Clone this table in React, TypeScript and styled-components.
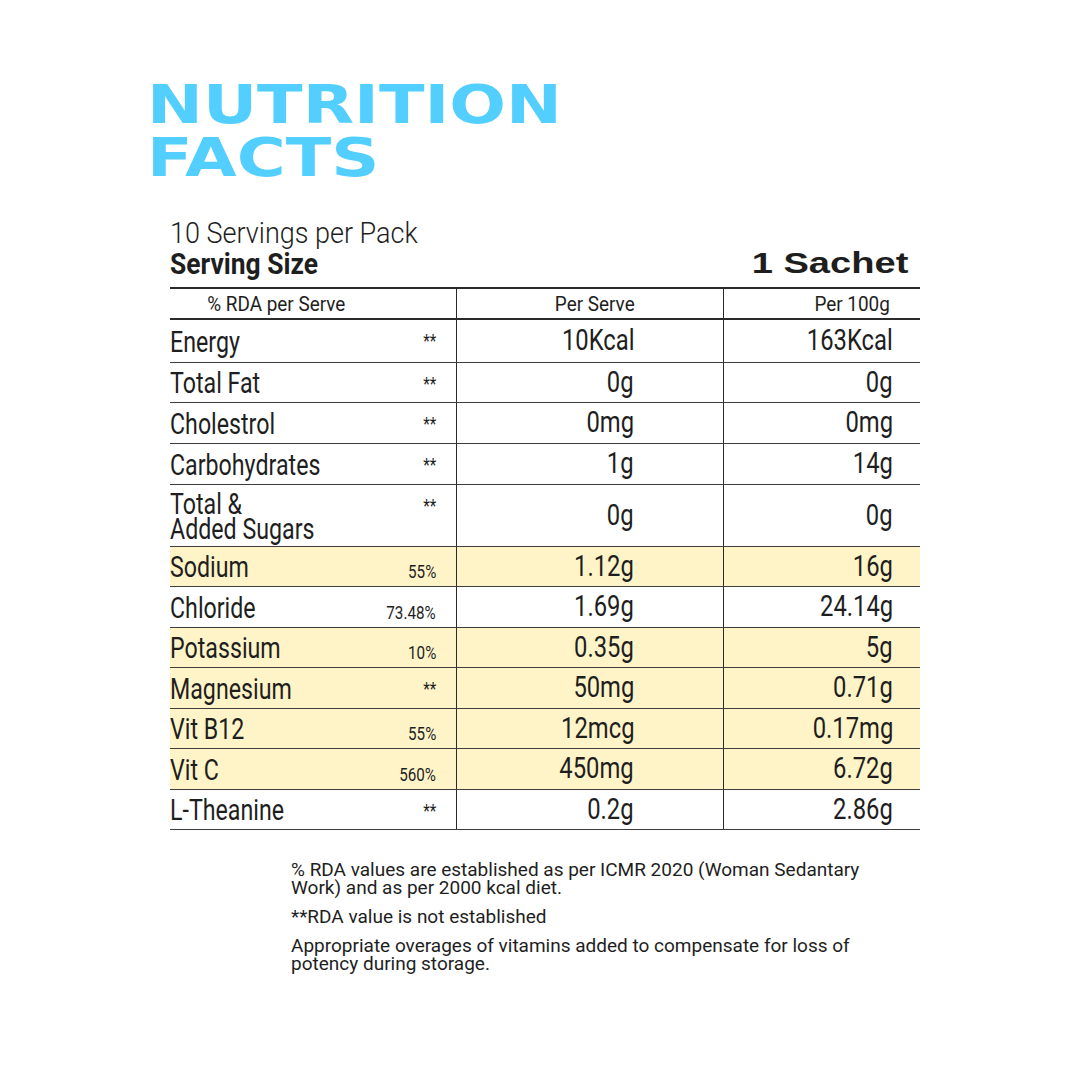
import React from "react";
import styled, { createGlobalStyle } from "styled-components";

const Global = createGlobalStyle`
  html, body { margin: 0; padding: 0; background: #ffffff; }
  body { font-family: Roboto, "Liberation Sans", sans-serif; color: #1e1e1e; }
`;

const Page = styled.div`
  width: 1080px;
  height: 1080px;
  box-sizing: border-box;
  padding: 78px 0 0 150px;
  background: #fff;
  overflow: hidden;
`;

const Title = styled.h1`
  margin: 0 0 0 -3px;
  font-family: "DejaVu Sans", sans-serif;
  font-weight: 700;
  font-size: 53px;
  line-height: 53px;
  color: #52cfff;
`;

const TitleLine = styled.span`
  display: block;
  transform: scaleX(1.26);
  transform-origin: left center;
  white-space: nowrap;
`;

const Panel = styled.div`
  width: 750px;
  margin: 34px 0 0 20px;
`;

const Cond = styled.span<{ $origin?: string; $sx?: number }>`
  display: inline-block;
  white-space: nowrap;
  transform: scaleX(${(p) => p.$sx ?? 0.84});
  transform-origin: ${(p) => p.$origin || "left"} center;
`;

const Servings = styled.div`
  font-size: 30px;
  font-weight: 300;
  line-height: 30px;
  color: #1e1e1e;
`;

const SizeRow = styled.div`
  display: flex;
  justify-content: space-between;
  align-items: flex-end;
  padding-bottom: 9px;
  border-bottom: 2px solid #2a2a2a;
`;

const SizeLabel = styled.div`
  font-size: 30px;
  font-weight: 700;
  line-height: 28px;
`;

const Sachet = styled.div`
  font-family: "Liberation Sans", Arial, sans-serif;
  font-weight: 700;
  font-size: 30px;
  line-height: 30px;
  margin-right: 12px;
  span {
    display: inline-block;
    transform: scaleX(1.27);
    transform-origin: right center;
  }
`;

const Row = styled.div<{ $hl?: boolean; $h?: number; $head?: boolean }>`
  display: grid;
  grid-template-columns: 286px 267px 197px;
  height: ${(p) => p.$h || 40}px;
  background: ${(p) => (p.$hl ? "#fff4c8" : "transparent")};
  border-bottom: ${(p) => (p.$head ? "2px solid #2a2a2a" : "1px solid #3d3d3d")};
  box-sizing: border-box;
`;

const HeadCell = styled.div<{ $pad: number; $divider?: boolean }>`
  display: flex;
  align-items: center;
  justify-content: flex-end;
  padding-right: ${(p) => p.$pad}px;
  font-size: 21px;
  color: #1e1e1e;
  border-left: ${(p) => (p.$divider ? "1.5px solid #2a2a2a" : "none")};
`;

const NameCell = styled.div`
  display: flex;
  align-items: center;
  justify-content: space-between;
  padding-right: 20px;
`;

const Name = styled.div`
  font-size: 29px;
  line-height: 25px;
  padding-top: 2px;
`;

const Rda = styled.div<{ $star?: boolean }>`
  font-size: 19px;
  align-self: ${(p) => (p.$star ? "flex-start" : "flex-end")};
  padding-top: ${(p) => (p.$star ? "9px" : "0")};
  padding-bottom: ${(p) => (p.$star ? "0" : "3px")};
`;

const ValueCell = styled.div<{ $pad: number }>`
  display: flex;
  align-items: center;
  justify-content: flex-end;
  padding-right: ${(p) => p.$pad}px;
  border-left: 1.5px solid #2a2a2a;
  font-size: 29px;
  padding-bottom: 2px;
`;

const Notes = styled.div`
  margin: 31px 0 0 121px;
  width: 620px;
  font-size: 19px;
  line-height: 18px;
  color: #1e1e1e;
  display: flex;
  flex-direction: column;
  gap: 11px;
`;

const Note = styled.p`
  margin: 0;
  white-space: nowrap;
`;

type Item = { name: React.ReactNode; rda: string; serve: string; per100: string; hl?: boolean; h?: number };

const items: Item[] = [
  { name: "Energy", rda: "**", serve: "10Kcal", per100: "163Kcal", h: 43 },
  { name: "Total Fat", rda: "**", serve: "0g", per100: "0g" },
  { name: "Cholestrol", rda: "**", serve: "0mg", per100: "0mg", h: 41 },
  { name: "Carbohydrates", rda: "**", serve: "1g", per100: "14g", h: 41 },
  {
    name: (
      <>
        Total &amp;
        <br />
        Added Sugars
      </>
    ),
    rda: "**",
    serve: "0g",
    per100: "0g",
    h: 62,
  },
  { name: "Sodium", rda: "55%", serve: "1.12g", per100: "16g", hl: true },
  { name: "Chloride", rda: "73.48%", serve: "1.69g", per100: "24.14g", h: 41 },
  { name: "Potassium", rda: "10%", serve: "0.35g", per100: "5g", hl: true },
  { name: "Magnesium", rda: "**", serve: "50mg", per100: "0.71g", hl: true, h: 41 },
  { name: "Vit B12", rda: "55%", serve: "12mcg", per100: "0.17mg", hl: true },
  { name: "Vit C", rda: "560%", serve: "450mg", per100: "6.72g", hl: true, h: 41 },
  { name: "L-Theanine", rda: "**", serve: "0.2g", per100: "2.86g" },
];

export default function App() {
  return (
    <>
      <Global />
      <Page>
        <Title>
          <TitleLine>NUTRITION</TitleLine>
          <TitleLine>FACTS</TitleLine>
        </Title>
        <Panel>
          <Servings>
            <Cond $sx={0.9}>10 Servings per Pack</Cond>
          </Servings>
          <SizeRow>
            <SizeLabel>
              <Cond $sx={0.88}>Serving Size</Cond>
            </SizeLabel>
            <Sachet>
              <span>1 Sachet</span>
            </Sachet>
          </SizeRow>
          <Row $head $h={31}>
            <HeadCell $pad={111}>
              <Cond $origin="right" $sx={0.9}>% RDA per Serve</Cond>
            </HeadCell>
            <HeadCell $pad={88} $divider>
              <Cond $origin="right" $sx={0.9}>Per Serve</Cond>
            </HeadCell>
            <HeadCell $pad={30} $divider>
              <Cond $origin="right" $sx={0.9}>Per 100g</Cond>
            </HeadCell>
          </Row>
          {items.map((it, i) => (
            <Row key={i} $hl={it.hl} $h={it.h}>
              <NameCell>
                <Name>
                  <Cond $sx={0.8}>{it.name}</Cond>
                </Name>
                <Rda $star={it.rda === "**"}>
                  <Cond $origin="right" $sx={0.8}>{it.rda}</Cond>
                </Rda>
              </NameCell>
              <ValueCell $pad={89}>
                <Cond $origin="right" $sx={0.82}>{it.serve}</Cond>
              </ValueCell>
              <ValueCell $pad={27}>
                <Cond $origin="right" $sx={0.82}>{it.per100}</Cond>
              </ValueCell>
            </Row>
          ))}
          <Notes>
            <Note>
              % RDA values are established as per ICMR 2020 (Woman Sedantary
              <br />
              Work) and as per 2000 kcal diet.
            </Note>
            <Note>**RDA value is not established</Note>
            <Note>
              Appropriate overages of vitamins added to compensate for loss of
              <br />
              potency during storage.
            </Note>
          </Notes>
        </Panel>
      </Page>
    </>
  );
}
